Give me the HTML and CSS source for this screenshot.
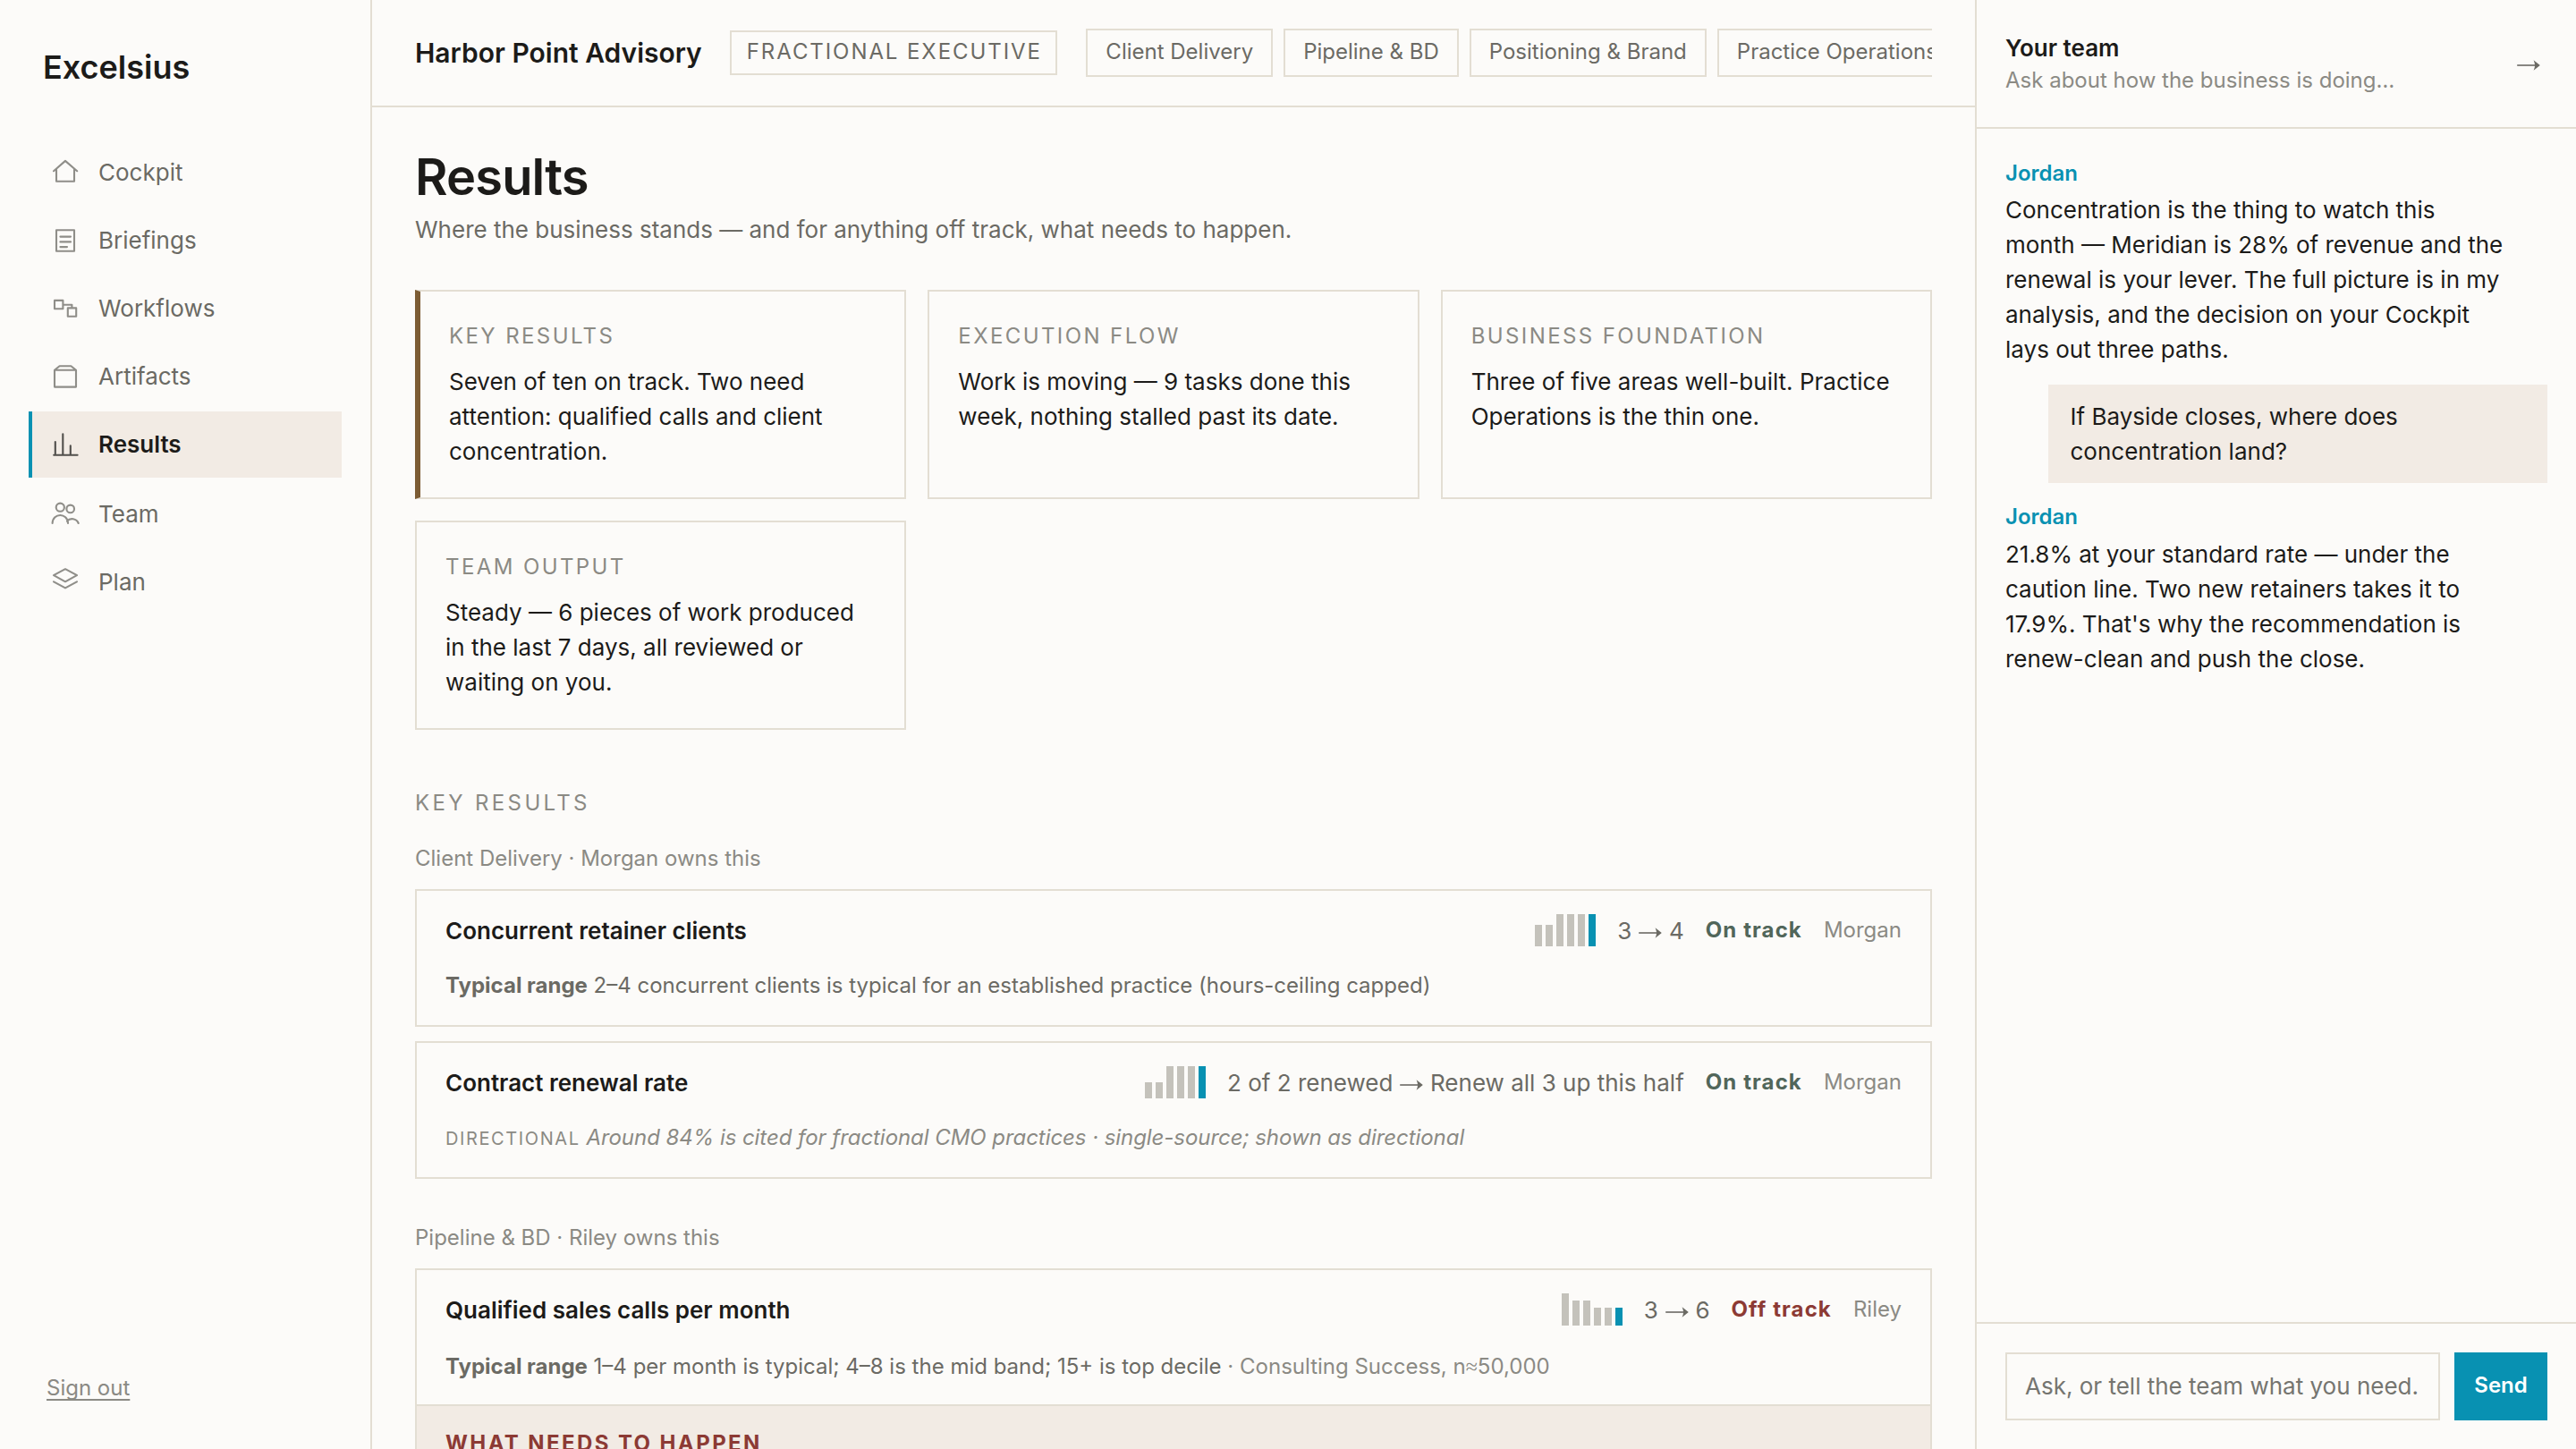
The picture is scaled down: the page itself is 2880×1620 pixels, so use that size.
FILE: index.html
```html
<!DOCTYPE html>
<html lang="en">
<head>
<meta charset="utf-8">
<title>Excelsius – Results</title>
<link rel="stylesheet" href="styles.css">
</head>
<body>
<svg width="0" height="0" class="defs">
  <symbol id="arrow" viewBox="0 0 28 14"><path d="M1.2 7h24"/><path class="head" d="M19.6 1.2 26.8 7l-7.2 5.800c.8-2 1.400-3.800 1.400-5.800s-.6-3.800-1.400-5.800z"/></symbol>
</svg>
<div class="app">
  <aside class="sidebar">
    <div class="brand">Excelsius</div>
    <nav class="nav">
      <a class="nav-item"><svg class="icon" viewBox="0 0 34 34"><path d="M4 15.2 17 3.9l13.2 11.3M7 13.5v13.2h20V13.5"/></svg>Cockpit</a>
      <a class="nav-item"><svg class="icon" viewBox="0 0 34 34"><path d="M7 5.2h20v23.6H7zM11.4 12.6H23M11.4 18.4H23M11.4 24.1H19"/></svg>Briefings</a>
      <a class="nav-item"><svg class="icon" viewBox="0 0 34 34"><path d="M5 7.9h9.4v9.3H5zM19.8 16.4h9.4v9.4h-9.4zM14.4 12.7h10v3.7"/></svg>Workflows</a>
      <a class="nav-item"><svg class="icon" viewBox="0 0 34 34"><path d="M5 9.8h24v18.8H5zM5 9.8l5.6-4.5h12.8L29 9.8"/></svg>Artifacts</a>
      <a class="nav-item active"><svg class="icon" viewBox="0 0 34 34"><path d="M4.2 28.7h26.4M5.8 28.7V14M14.3 28.7V5.2M22.8 28.7V18.4"/></svg>Results</a>
      <a class="nav-item nav-break"><svg class="icon" viewBox="0 0 34 34"><circle cx="11.3" cy="9.2" r="4.6"/><circle cx="22.7" cy="10.9" r="4.3"/><path d="M2.6 27c.4-12 17-12 17.4 0M19 24.6c3.5-4 10.5-3 12.7 2.4"/></svg>Team</a>
      <a class="nav-item"><svg class="icon" viewBox="0 0 34 34"><path d="M17 2.2 30 9.2l-13 7.1L4 9.2zM4 16.3l13 7.1 13-7.1"/></svg>Plan</a>
    </nav>
    <a class="signout"><span>Sign out</span></a>
  </aside>

  <main class="main">
    <header class="topbar">
      <div class="org">Harbor Point Advisory</div>
      <div class="tag">Fractional Executive</div>
      <div class="chips">
        <span class="chip">Client Delivery</span>
        <span class="chip">Pipeline &amp; BD</span>
        <span class="chip">Positioning &amp; Brand</span>
        <span class="chip">Practice Operations</span>
      </div>
    </header>
    <div class="content">
      <h1 class="title">Results</h1>
      <p class="subtitle">Where the business stands — and for anything off track, what needs to happen.</p>

      <section class="summary">
        <article class="tile attention"><h3 class="tile-label">Key results</h3><p class="tile-text">Seven of ten on track. Two need attention: qualified calls and client concentration.</p></article>
        <article class="tile"><h3 class="tile-label">Execution flow</h3><p class="tile-text">Work is moving — 9 tasks done this week, nothing stalled past its date.</p></article>
        <article class="tile"><h3 class="tile-label">Business foundation</h3><p class="tile-text">Three of five areas well-built. Practice Operations is the thin one.</p></article>
        <article class="tile"><h3 class="tile-label">Team output</h3><p class="tile-text">Steady — 6 pieces of work produced in the last 7 days, all reviewed or waiting on you.</p></article>
      </section>

      <h2 class="section-label">Key results</h2>
      <p class="owner-line">Client Delivery · Morgan owns this</p>
      <article class="metric">
        <div class="metric-row">
          <h4 class="metric-name">Concurrent retainer clients</h4>
          <div class="bars"><i style="height:24px"></i><i style="height:24px"></i><i style="height:36px"></i><i style="height:36px"></i><i style="height:36px"></i><i class="now" style="height:36px"></i></div>
          <span class="value">3 <svg class="arrow"><use href="#arrow"/></svg> 4</span><span class="status good">On track</span><span class="owner">Morgan</span>
        </div>
        <p class="note"><b>Typical range</b> 2–4 concurrent clients is typical for an established practice (hours-ceiling capped)</p>
      </article>
      <article class="metric">
        <div class="metric-row">
          <h4 class="metric-name">Contract renewal rate</h4>
          <div class="bars"><i style="height:18px"></i><i style="height:18px"></i><i style="height:36px"></i><i style="height:36px"></i><i style="height:36px"></i><i class="now" style="height:36px"></i></div>
          <span class="value">2 of 2 renewed <svg class="arrow"><use href="#arrow"/></svg> Renew all 3 up this half</span><span class="status good">On track</span><span class="owner">Morgan</span>
        </div>
        <p class="note directional"><span class="flag">Directional</span> <em>Around 84% is cited for fractional CMO practices · single-source; shown as directional</em></p>
      </article>

      <p class="owner-line second">Pipeline &amp; BD · Riley owns this</p>
      <article class="metric off-track">
        <div class="metric-row">
          <h4 class="metric-name">Qualified sales calls per month</h4>
          <div class="bars"><i style="height:36px"></i><i style="height:28px"></i><i style="height:28px"></i><i style="height:20px"></i><i style="height:20px"></i><i class="now" style="height:20px"></i></div>
          <span class="value">3 <svg class="arrow"><use href="#arrow"/></svg> 6</span><span class="status bad">Off track</span><span class="owner">Riley</span>
        </div>
        <p class="note"><b>Typical range</b> 1–4 per month is typical; 4–8 is the mid band; 15+ is top decile <span class="source">· Consulting Success, n<span class="sym">≈</span>50,000</span></p>
        <div class="action"><h5 class="action-label">What needs to happen</h5></div>
      </article>
    </div>
  </main>

  <aside class="rail">
    <header class="rail-head">
      <div>
        <div class="rail-title">Your team</div>
        <div class="rail-sub">Ask about how the business is doing…</div>
      </div>
      <svg class="arrow rail-arrow"><use href="#arrow"/></svg>
    </header>
    <div class="thread">
      <div class="author">Jordan</div>
      <p class="message">Concentration is the thing to watch this month — Meridian is 28% of revenue and the renewal is your lever. The full picture is in my analysis, and the decision on your Cockpit lays out three paths.</p>
      <p class="bubble">If Bayside closes, where does concentration land?</p>
      <div class="author">Jordan</div>
      <p class="message">21.8% at your standard rate — under the caution line. Two new retainers takes it to 17.9%. That's why the recommendation is renew-clean and push the close.</p>
    </div>
    <footer class="composer">
      <div class="field">Ask, or tell the team what you need.</div>
      <div class="send">Send</div>
    </footer>
  </aside>
</div>
</body>
</html>
```
FILE: styles.css
```css
* { box-sizing: border-box; margin: 0; padding: 0; }

:root {
  --bg: #fcfbf9;
  --line: #e3ded3;
  --tint: #f2ebe4;
  --ink: #1c1b19;
  --mid: #6b6a64;
  --soft: #8b8a84;
  --teal: #0891b2;
  --red: #8c3a34;
}

body {
  background: var(--bg);
  color: var(--ink);
  font: 26px/39px Inter, "Liberation Sans", sans-serif;
  overflow: hidden;
}

h1, h2, h3, h4, h5 { font-weight: 400; }

.defs { display: block; height: 0; }
.sym { font-family: "Liberation Serif", serif; line-height: 1; }
.arrow { width: 28px; height: 14px; margin: 0 -0.5px; fill: none; stroke: currentColor; stroke-width: 1.6; }
.arrow .head, .head { fill: currentColor; stroke: none; }

.app { display: flex; width: 2880px; height: 1620px; overflow: hidden; }

/* Sidebar */
.sidebar {
  width: 416px;
  flex: none;
  border-right: 2px solid var(--line);
  padding: 48px 32px 50px;
  display: flex;
  flex-direction: column;
}
.brand { font-size: 36px; line-height: 54px; font-weight: 600; padding-left: 16px; }
.nav { margin-top: 54px; display: flex; flex-direction: column; gap: 2px; }
.nav-item {
  height: 74px;
  display: flex;
  align-items: center;
  gap: 20px;
  padding: 0 0 1px 20px;
  border-left: 4px solid transparent;
  color: var(--mid);
}
.nav-break { margin-top: 2px; }
.nav-item.active { background: var(--tint); border-left-color: var(--teal); color: var(--ink); font-weight: 600; }
.icon {
  width: 34px;
  height: 34px;
  margin-top: 1px;
  fill: none;
  stroke: currentColor;
  stroke-width: 2.1;
  stroke-linecap: round;
  stroke-linejoin: round;
  opacity: 0.75;
}
.signout { margin-top: auto; padding-left: 20px; font-size: 24px; line-height: 36px; color: var(--soft); }
.signout span {
  text-decoration: underline 2px;
  text-underline-offset: 4px;
  text-decoration-skip-ink: none;
}

/* Main column */
.main { width: 1792px; flex: none; overflow: hidden; }
.topbar { height: 120px; border-bottom: 2px solid var(--line); padding: 0 48px; display: flex; align-items: center; gap: 32px; white-space: nowrap; }
.org { font-size: 30px; font-weight: 600; margin-right: -1px; }
.tag { height: 50px; border: 2px solid var(--line); padding: 0 15.5px 0 17px; font-size: 24px; line-height: 44px; letter-spacing: 1.92px; text-transform: uppercase; color: var(--mid); }
.chips { flex: 1; min-width: 0; overflow: hidden; display: flex; gap: 12px; }
.chip { flex: none; height: 54px; border: 2px solid var(--line); padding: 0 20px; font-size: 24px; line-height: 48px; color: var(--mid); }

.content { padding: 42px 48px 0; }
.title { font-size: 56px; line-height: 72px; font-weight: 600; letter-spacing: -0.84px; }
.subtitle { color: var(--mid); margin-top: 3px; line-height: 40px; }

.summary { display: grid; grid-template-columns: repeat(3, 1fr); gap: 24px; margin-top: 47px; }
.tile { height: 234px; border: 2px solid var(--line); padding: 32px; }
.tile.attention { border-left: 6px solid #7c5c34; }
.tile-label { font-size: 24px; line-height: 36px; letter-spacing: 2.4px; text-transform: uppercase; color: var(--soft); }
.tile-text { margin-top: 13px; }

.section-label { margin-top: 64px; font-size: 24px; line-height: 36px; letter-spacing: 3.36px; text-transform: uppercase; color: var(--soft); }
.owner-line { margin: 26px 0 16px; font-size: 24px; line-height: 36px; color: var(--soft); }
.owner-line.second { margin-top: 48px; }

.metric { border: 2px solid var(--line); margin-bottom: 16px; height: 154px; }
.metric-row { display: flex; align-items: center; gap: 24px; padding: 0 32px; height: 39px; margin-top: 25px; }
.metric-name { flex: 1; font-size: 26px; font-weight: 600; }
.bars { display: flex; align-items: flex-end; gap: 4px; height: 36px; align-self: flex-start; margin-top: 1px; }
.bars i { width: 8px; background: #c4c2bb; }
.bars .now { background: var(--teal); }
.value { color: var(--mid); white-space: nowrap; }
.status, .owner { font-size: 24px; line-height: 36px; margin-top: -2px; }
.status { font-weight: 700; letter-spacing: 1.1px; }
.status.good { color: #51665a; }
.status.bad { color: var(--red); }
.owner { color: var(--soft); }
.note { padding: 24px 32px 0; font-size: 24px; line-height: 36px; color: var(--mid); }
.note.directional, .source { color: var(--soft); }
.note em { letter-spacing: -0.06px; }
.flag { font-size: 20px; letter-spacing: 1.6px; text-transform: uppercase; }
.off-track { height: 300px; }
.off-track .note { padding-top: 26px; }
.action { margin-top: 24px; height: 120px; background: var(--tint); border-top: 2px solid var(--line); padding: 24px 32px; }
.action-label { font-size: 24px; line-height: 36px; font-weight: 700; letter-spacing: 2.4px; text-transform: uppercase; color: var(--red); }

/* Team rail */
.rail { flex: 1; border-left: 2px solid var(--line); display: flex; flex-direction: column; }
.rail-head { height: 144px; border-bottom: 2px solid var(--line); padding: 0 40px 0 32px; display: flex; align-items: center; justify-content: space-between; }
.rail-title { font-weight: 600; line-height: 37px; }
.rail-sub { font-size: 24px; line-height: 36px; color: var(--soft); }
.rail-arrow { color: var(--mid); margin-top: 4px; }
.thread { flex: 1; padding: 32px; }
.author { font-size: 24px; line-height: 36px; font-weight: 600; color: var(--teal); margin-bottom: 4px; }
.author:first-child { margin-bottom: 3px; }
.message { max-width: 92%; }
.bubble { width: 92%; margin: 20px 0 20px auto; padding: 16px 24px; background: var(--tint); }
.composer { height: 142px; border-top: 2px solid var(--line); padding: 32px; display: flex; gap: 16px; }
.field { flex: 1; height: 76px; border: 2px solid var(--line); padding-left: 20px; line-height: 72px; color: #757570; white-space: nowrap; }
.send { width: 104px; height: 76px; background: var(--teal); color: #fff; font-size: 24px; line-height: 74px; font-weight: 600; text-align: center; }
```
